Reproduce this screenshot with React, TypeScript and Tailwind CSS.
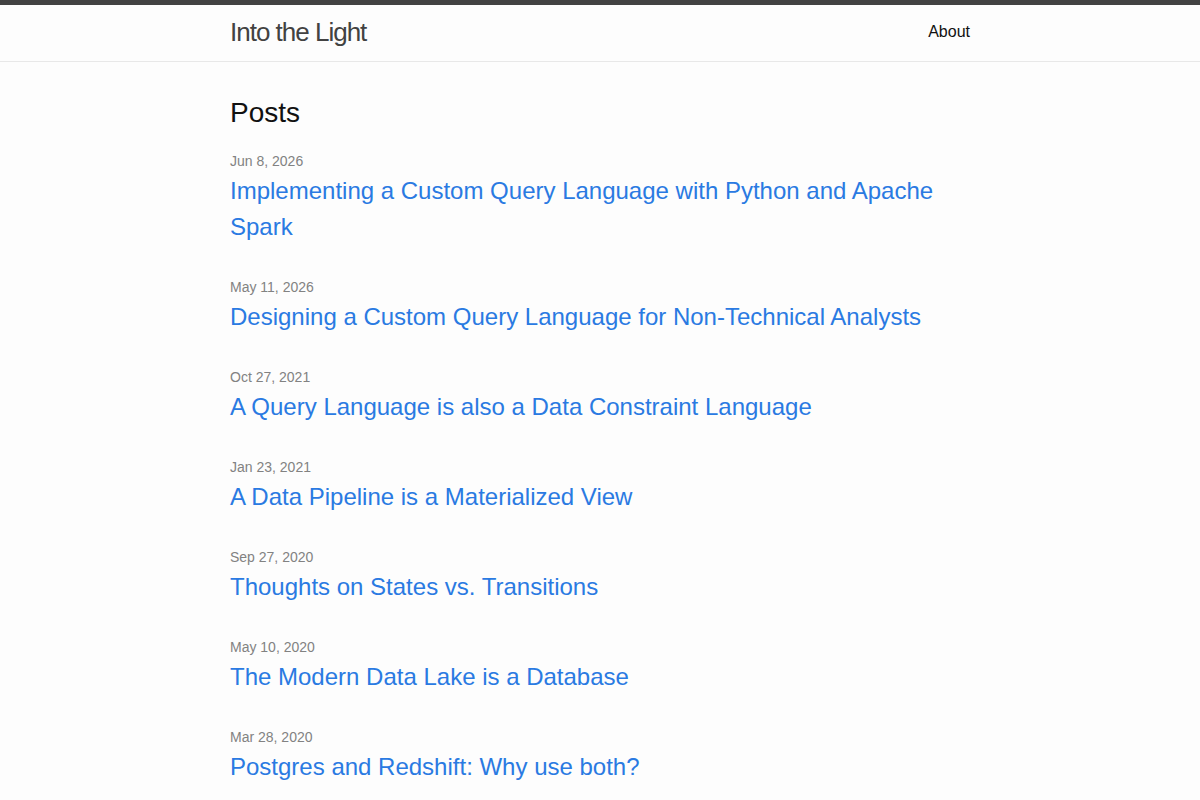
import React from "react";

const posts = [
  { date: "Jun 8, 2026", title: "Implementing a Custom Query Language with Python and Apache Spark" },
  { date: "May 11, 2026", title: "Designing a Custom Query Language for Non-Technical Analysts" },
  { date: "Oct 27, 2021", title: "A Query Language is also a Data Constraint Language" },
  { date: "Jan 23, 2021", title: "A Data Pipeline is a Materialized View" },
  { date: "Sep 27, 2020", title: "Thoughts on States vs. Transitions" },
  { date: "May 10, 2020", title: "The Modern Data Lake is a Database" },
  { date: "Mar 28, 2020", title: "Postgres and Redshift: Why use both?" },
  { date: "Jan 12, 2020", title: "Writing Better Data Pipelines" },
];

export default function App() {
  return (
    <div
      className="min-h-screen bg-[#fdfdfd] text-[#111111] text-[16px] leading-[1.5]"
      style={{ fontFamily: '"Liberation Sans", Arial, Helvetica, sans-serif' }}
    >
      <header className="border-t-[5px] border-t-[#424242] border-b border-b-[#e8e8e8]">
        <div className="max-w-[800px] mx-auto px-[30px] flex items-start justify-between h-[56px]">
          <a href="#" className="text-[26px] font-light tracking-[-1px] leading-[54px] text-[#424242]">
            Into the Light
          </a>
          <nav className="leading-[54px]">
            <a href="#" className="text-[#111111]">About</a>
          </nav>
        </div>
      </header>
      <main className="py-[30px]">
        <div className="max-w-[800px] mx-auto px-[30px]">
          <h2 className="text-[28px] leading-[42px] mb-[15px] font-normal">Posts</h2>
          <ul className="list-none m-0 p-0">
            {posts.map((p) => (
              <li key={p.title} className="mb-[30px]">
                <span className="text-[14px] text-[#828282]">{p.date}</span>
                <h3 className="text-[24px] leading-[36px] font-normal">
                  <a href="#" className="text-[#2a7ae2]">{p.title}</a>
                </h3>
              </li>
            ))}
          </ul>
        </div>
      </main>
    </div>
  );
}
